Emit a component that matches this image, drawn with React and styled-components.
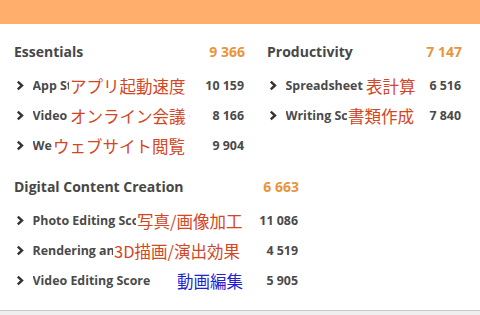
import React from 'react'
import styled, { createGlobalStyle } from 'styled-components'

const GlobalStyle = createGlobalStyle`
  html, body {
    margin: 0;
    padding: 0;
    background: #efefef;
  }
  body {
    font-family: "Open Sans", "Noto Sans", sans-serif;
    color: #454545;
  }
`

const Page = styled.div`
  width: 480px;
  height: 315px;
  overflow: hidden;
  background: #efefef;
`

const TopBar = styled.div`
  height: 24px;
  background: #ffae6b;
`

// white score card, faint grey edge at the bottom
const Card = styled.div`
  box-sizing: border-box;
  height: 287px;
  padding: 17px 0 0 14px;
  background: #fff;
  border-bottom: 1px solid #c8c8c8;
`

const Columns = styled.div`
  display: flex;
  align-items: flex-start;
  gap: 22px;
`

const Section = styled.section`
  width: ${p => p.$width}px;
  margin-top: ${p => p.$top || 0}px;
`

const Header = styled.div`
  display: flex;
  align-items: center;
  justify-content: space-between;
  height: 20px;
  margin-bottom: 9.5px;
  font-size: 14px;
  font-weight: 700;
`

const Title = styled.h2`
  margin: 0;
  font: inherit;
  color: #474747;
`

const Total = styled.span`
  color: #e8953c;
`

const Row = styled.div`
  position: relative;
  display: flex;
  align-items: center;
  height: 30px;
  font-size: 12.4px;
  font-weight: 700;
  color: #4a4a4a;
`

const ChevronIcon = styled.svg`
  flex: none;
  width: 8px;
  height: 11px;
  margin: 0 9px 0 1.5px;
`

const Label = styled.span`
  flex: 1;
  min-width: 0;
  white-space: nowrap;
  overflow: hidden;
`

const Score = styled.span`
  flex: none;
  padding: 0 1px 0 12px;
`

// japanese caption pasted over the english label
const Note = styled.span`
  position: absolute;
  top: 50%;
  left: ${p => p.$left}px;
  transform: translateY(-50%);
  padding: 0 3px 0 ${p => p.$pad || 1}px;
  background: #fff;
  font-family: "Noto Sans CJK JP", "Noto Sans", sans-serif;
  font-size: 16.5px;
  font-weight: 400;
  line-height: 22px;
  white-space: nowrap;
  color: ${p => (p.$blue ? '#1f1fd4' : '#d3461f')};
`

const Chevron = () => (
  <ChevronIcon viewBox='0 0 8 11'>
    <polyline points='1.8,1.6 6,5.5 1.8,9.4' fill='none' stroke='#333' strokeWidth='2.4' />
  </ChevronIcon>
)

const essentials = [
  { label: 'App Start-up Score', note: 'アプリ起動速度', left: 55, score: '10 159' },
  { label: 'Video Conferencing Score', note: 'オンライン会議', left: 55, score: '8 166' },
  { label: 'Web Browsing Score', note: 'ウェブサイト閲覧', left: 38, score: '9 904' }
]

const productivity = [
  { label: 'Spreadsheets Score', note: '表計算', left: 96, pad: 3, score: '6 516' },
  { label: 'Writing Score', note: '書類作成', left: 80, score: '7 840' }
]

const creation = [
  { label: 'Photo Editing Score', note: '写真/画像加工', left: 122, score: '11 086' },
  { label: 'Rendering and Visualization Score', note: '3D描画/演出効果', left: 99, score: '4 519' },
  { label: 'Video Editing Score', note: '動画編集', left: 160, pad: 3, score: '5 905', blue: true }
]

const Group = ({ title, total, rows, width, top }) => (
  <Section $width={width} $top={top}>
    <Header>
      <Title>{title}</Title>
      <Total>{total}</Total>
    </Header>
    {rows.map(r => (
      <Row key={r.label}>
        <Chevron />
        <Label>{r.label}</Label>
        <Score>{r.score}</Score>
        <Note $left={r.left} $pad={r.pad} $blue={r.blue}>{r.note}</Note>
      </Row>
    ))}
  </Section>
)

export default function App() {
  return (
    <Page>
      <GlobalStyle />
      <TopBar />
      <Card>
        <Columns>
          <Group title='Essentials' total='9 366' rows={essentials} width={231} />
          <Group title='Productivity' total='7 147' rows={productivity} width={195} />
        </Columns>
        <Group title='Digital Content Creation' total='6 663' rows={creation} width={285} top={15.5} />
      </Card>
    </Page>
  )
}
